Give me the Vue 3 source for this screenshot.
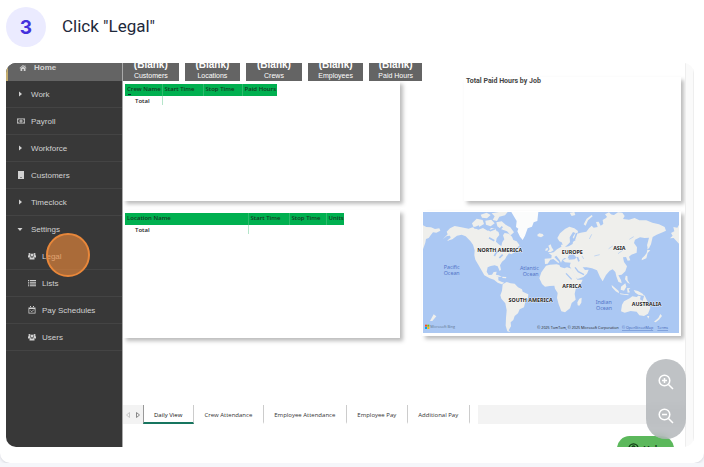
<script setup>
const menu = [
  { label: 'Home', icon: 'home', active: true },
  { label: 'Work', icon: 'right' },
  { label: 'Payroll', icon: 'money' },
  { label: 'Workforce', icon: 'right' },
  { label: 'Customers', icon: 'building' },
  { label: 'Timeclock', icon: 'right' },
  { label: 'Settings', icon: 'down', open: true },
  { label: 'Legal', icon: 'users', sub: true },
  { label: 'Lists', icon: 'list', sub: true },
  { label: 'Pay Schedules', icon: 'calendar', sub: true },
  { label: 'Users', icon: 'users', sub: true },
]
const kpis = ['Customers', 'Locations', 'Crews', 'Employees', 'Paid Hours']
const tabs = ['Daily View', 'Crew Attendance', 'Employee Attendance', 'Employee Pay', 'Additional Pay']
</script>

<template>
  <article class="step">
    <header class="step-head">
      <span class="step-number">3</span>
      <h1>Click "Legal"</h1>
    </header>

    <div class="frame">
      <nav class="sidebar">
        <a
          v-for="item in menu"
          :key="item.label"
          href="#"
          class="item"
          :class="{ active: item.active, sub: item.sub, open: item.open }"
        >
          <svg class="icon" viewBox="0 0 16 16" aria-hidden="true">
            <path v-if="item.icon === 'home'" d="M8 2 15 8l-1 1-6-5-6 5-1-1zM3 9l5-4 5 4v5H9.500V10h-3v4H3zM11 3h2v3l-2-2z" />
            <path v-else-if="item.icon === 'right'" d="M4 3l6 5-6 5z" />
            <path v-else-if="item.icon === 'down'" d="M1 6h10L6 12z" />
            <g v-else-if="item.icon === 'money'">
              <path fill-rule="evenodd" d="M0 3h16v10H0zM1.500 4.500v7h13v-7z" />
              <path fill-rule="evenodd" d="M8 5a3 3 0 0 1 0 6 3 3 0 0 1 0-6zM7.200 6.500v3h1.600v-3z" />
              <path d="M2 5h2L2 7zM14 5h-2l2 2zM2 11h2L2 9zM14 11h-2l2-2z" />
            </g>
            <path v-else-if="item.icon === 'building'" fill-rule="evenodd" d="M2 0h12v16H2zM7 12v2h2v-2z" />
            <g v-else-if="item.icon === 'users'">
              <circle cx="3" cy="4" r="2.200" /><circle cx="13" cy="4" r="2.200" /><circle cx="8" cy="6" r="3" />
              <path d="M0 11V8q0-2 2-2h2q0 3 2 4-3 0-3 1zM16 11V8q0-2-2-2h-2q0 3-2 4 3 0 3 1zM3 15v-2q0-3 2-3 3 2 6 0 2 0 2 3v2z" />
            </g>
            <path v-else-if="item.icon === 'list'" d="M0 2h2.500v2H0zM4 2h12v2H4zM0 5.500h2.500v2H0zM4 5.500h12v2H4zM0 9h2.500v2H0zM4 9h12v2H4zM0 12.500h2.500v2H0zM4 12.500h12v2H4z" />
            <g v-else>
              <path fill-rule="evenodd" d="M1 3h14v12H1zM2.500 6v7.500h11V6zM4 0h2v4H4zM10 0h2v4h-2z" />
              <path d="M5 9l2.500 2.500L12 7" fill="none" stroke="currentColor" stroke-width="1.500" />
            </g>
          </svg>
          <span>{{ item.label }}</span>
        </a>
      </nav>

      <main class="report">
        <div class="panels">
          <div class="left">
            <div class="kpis">
              <div v-for="k in kpis" :key="k" class="kpi">
                <strong>(Blank)</strong>
                <span>{{ k }}</span>
              </div>
            </div>
            <section class="card crew">
              <table>
                <thead>
                  <tr>
                    <th class="w37 sorted">Crew Name</th>
                    <th class="w41">Start Time</th>
                    <th class="w39">Stop Time</th>
                    <th class="w35">Paid Hours</th>
                  </tr>
                </thead>
                <tbody>
                  <tr><td>Total</td><td></td><td></td><td></td></tr>
                </tbody>
              </table>
            </section>
            <section class="card location">
              <table>
                <thead>
                  <tr>
                    <th class="w123">Location Name</th>
                    <th class="w41">Start Time</th>
                    <th class="w37">Stop Time</th>
                    <th class="w18">Units</th>
                  </tr>
                </thead>
                <tbody>
                  <tr><td>Total</td><td></td><td></td><td></td></tr>
                </tbody>
              </table>
            </section>
          </div>

          <div class="right">
            <section class="card job"><h2>Total Paid Hours by Job</h2></section>
            <section class="card map">
              <svg viewBox="24 22 768 363" role="img" aria-label="World map">
                <rect x="24" y="22" width="768" height="363" fill="#abc8f3" />
                <g fill="#efefec">
                  <path d="M24 62l10 5 14 1 12 5 13-2 3 7-12 6-10-1-7 9-6 8-8 3-2 11-7 20z" />
                  <path d="M84 103l14-14-3-8 10-10 14-7 20 4 22 4 12-4 17 7 14-5 14 8 12-7 10 10 10-1 3 11-8 10-2 10 8 8 8 5 3-12 6-8-4-12 5-7 13 2 9 9 4 10 10 4 9 12-8 8-12 6-8 2 14 4-11 7-7-3-7 9-5 9-9 7-6 11 3 13-4 4-6-14-9-3-12 2-9 4-3 13 6 10 10-1 5-8 9-1-3 12 8 3 0 11 9 4 9 3-8 5-12-5-11-9-13-4-16-9-9-16-10-17-8-14-3-13 1-15-5-17-8-11-14-14-12-5-14 3-14 11-17 5 12-10-2-6-9 1z" />
                  <path d="M171 56l14-14 18 4 4 12-15 9-17-1zM197 30l18-6 12 7-11 10-15-2zM230 26l22-4h26l-8 10-17 4-7 13-13-3 6-11zM211 48l18-3 10 11-12 9-14-5zM244 53l16-3 12 10 14 8 11 15-10 9-11-12-17-6-12-9zM226 70l14 1 7 12-12 3z" />
                  <path d="M234 209l17 3 10 5-12-1-14-4zM262 216l12 1-1 4-11-1zM303 132l13-4 8 10-12 3z" />
                  <path d="M263 239l12-7 12 4 12 1 10 11 12 6 2 7 17 8-1 11-8 11-4 17-13 6-5 12-10 8-4 12-8 7 1 12-7 12 5 5-9-2-5-17 1-23 2-23-4-21-12-14-3-10 5-14z" />
                  <path d="M367 90l6-4 10 2 3 5-8 5-10-3z" />
                  <path d="M400 123l7-4 3 9 6 9-10 6-8-1 6-8zM392 132l7-3-1 8-7 2z" />
                  <path d="M390 178l-1-16 20-1 1-9-9-6 15-3 10-9 13-8-1-6 6 0 2 8 15-3 12-7 1-12 8 2-9-10 8-13-7-3-10 16 1 15-9 9-9 7-7-16-7-3-6-10 8-14 15-13 13-7 15 5 11 8-2 8 10-3 17-3 8-10 8-8 6 6 12-2-5-15 8-1 6 12 8-5-2-12 10-6 9-11 15 2 12-8 13 1 7 10-5 9 18 2 17-5 14 7 21 0 18 7 20 5 17 8 4 11-10 5-18 7-12 7-5 22-7 13-5-10 6-23-13 1-14-2-15 7-3 10 9 13-1 16-16 6-7 6 4 11-8 1-5-11-9 1 3 14 9 13-5 15-11 10-10 2 8 14 2 10-10-5-6-16-3-13-8-8-9 4-11 13-10 19-8-13-9-20-15-6-16-3-12 0 7 8 11-1-5 12-11 10-17 6-7-6-10-20-7-13 3-10-17-1-7-7 16-5 20 2 6-4-9-10-14 2-5 12-9-3-6 5-4 9-4-8-10-13-6 4 15 16-3 2-15-12-9 2-8 12z" />
                  <path d="M393 183l12-3 20-1 8 2 3 6 12 4 8-3 14 4 8 16 9 17 16 0-7 15-14 14-3 14 3 17-12 10-5 16-15 12-11-3-8-21-5-19 2-15-8-13-2-9-14 1-14 2-9-8-8-17 6-18z" />
                  <path d="M493 282l7-3-1 15-6 9-5-1-1-9zM792 60l-5 9-12-2 3 13-10 5 5 8-8 8 11-1 16 17z" />
                  <path d="M621 300l6-10 17-9 8-6 13 2 5-4 7 2-2 9 8 5 5-18 7 14 6 12 5 13-7 17-12 7-14-2-8-11-18-2-18 5-11-4z" />
                  <path d="M590 241l8 7 13 11 1 7-10-6-11-12zM614 266l15 2 12 1-1 3-24-3zM618 246l13-10 3 10-7 12-10-3zM636 251l10-1-5 5 4 8-7 1zM656 256l13 3 14 8 5 7-18-4-9-6zM632 213l5 1 1 13 7 11-7-4-8-10zM681 161l8-8 6-8 2-10 9 2-8 8-4 16-14 6zM697 134l1-13 5 8zM736 328l5 6-9 11-10 8-5-2 13-11zM696 334h7l-3 8zM56 329l8 6-12 14-7 0zM107 38l-1 7z" />
                  <path d="M506 59l9-17 15-11 3 4-14 12-7 16zM464 24l14-2 3 9-11 3zM570 29l12-6 8 8-12 8z" />
                </g>
                <path d="M289 22h81l-3 27-11 4-5 13-13 5-8 22-7 13-8-10-8-16 3-8-7-5 2-18-9-15z" fill="#fbfcfc" />
                <g fill="none" stroke="#abc8f3" stroke-width="5">
                  <path d="M206 66l20 12 14-6M222 99l16 9M262 66l-13 14M192 64l-14 7M252 137l-9 8-5 9M263 150l-10 10M487 157l5 13M461 163l18-2M466 115l12-10 7-20" />
                  <path d="M480 188l10 13 17 9M453 206l17 18" stroke-width="4" />
                  <path d="M538 154l16-4M581 132l12-8M609 147l15-11M643 104l13-8M501 154l5 9M523 103l7-14" stroke-width="2" />
                </g>
                <g class="land">
                  <text x="254" y="141">NORTH AMERICA</text>
                  <text x="347" y="291">SOUTH AMERICA</text>
                  <text x="472" y="149">EUROPE</text>
                  <text x="613" y="135">ASIA</text>
                  <text x="471" y="249">AFRICA</text>
                  <text x="695" y="303">AUSTRALIA</text>
                </g>
                <g class="sea">
                  <text x="110" y="193">Pacific</text><text x="110" y="211">Ocean</text>
                  <text x="343" y="197">Atlantic</text><text x="347" y="215">Ocean</text>
                  <text x="566" y="299">Indian</text><text x="567" y="317">Ocean</text>
                </g>
                <rect x="30" y="360" width="6" height="6" fill="#f25022" /><rect x="37" y="360" width="6" height="6" fill="#7fba00" />
                <rect x="30" y="367" width="6" height="6" fill="#00a4ef" /><rect x="37" y="367" width="6" height="6" fill="#ffb900" />
                <text x="46" y="371" class="bing">Microsoft Bing</text>
                <text x="367" y="374" class="copy">© 2025 TomTom, © 2025 Microsoft Corporation</text>
                <text x="621" y="374" class="copy link">© OpenStreetMap</text>
                <text x="727" y="374" class="copy link">Terms</text>
              </svg>
            </section>
          </div>
        </div>

        <div class="tabs">
          <div class="arrows">
            <button type="button" class="dim" aria-label="Previous page">
              <svg viewBox="0 0 6 8"><path d="M4.500 1.500v5L1.500 4z" /></svg>
            </button>
            <button type="button" aria-label="Next page">
              <svg viewBox="0 0 6 8"><path d="M1.500 1.500v5L4.500 4z" /></svg>
            </button>
          </div>
          <button v-for="(t, i) in tabs" :key="t" type="button" class="tab" :class="{ current: i === 0 }">{{ t }}</button>
          <div class="rest"></div>
        </div>
      </main>

      <div class="scroll"></div>

      <button type="button" class="help">
        <svg viewBox="0 0 12 12" aria-hidden="true">
          <circle cx="6" cy="6" r="5" /><path d="M4.500 4.800q0-1.500 1.500-1.500t1.500 1.400Q7.500 5.500 6 6.300V7M6 8.200v1" />
        </svg>
        <span>Help</span>
      </button>
      <div class="zoom">
        <button type="button" aria-label="Zoom in">
          <svg viewBox="0 0 16 16"><circle cx="6.500" cy="6.500" r="5.300" /><path d="M10.500 10.500 15 15M6.500 4v5M4 6.500h5" /></svg>
        </button>
        <button type="button" aria-label="Zoom out">
          <svg viewBox="0 0 16 16"><circle cx="6.500" cy="6.500" r="5.300" /><path d="M10.500 10.500 15 15M4 6.500h5" /></svg>
        </button>
      </div>
      <span class="marker"></span>
    </div>
  </article>
</template>

<style>
body {
  margin: 0;
  background: #f5f6fa;
}
</style>

<style scoped>
* {
  box-sizing: border-box;
}
button {
  padding: 0;
  border: 0;
  background: none;
  font: inherit;
  color: inherit;
}
.step {
  padding: 7px 10px 16px 6px;
  background: #fff;
  border-radius: 0 0 10px 10px;
  box-shadow: 0 1px 3px #d4d5dc;
  font-family: "Liberation Sans", Arial, sans-serif;
}
.step-head {
  display: flex;
  align-items: center;
  gap: 16px;
  padding-bottom: 16px;
}
.step-number {
  display: grid;
  place-items: center;
  width: 40px;
  height: 40px;
  border-radius: 50%;
  background: #ebebff;
  color: #4330dc;
  font: 700 19px Inter, sans-serif;
}
h1 {
  margin: 0;
  padding-bottom: 3px;
  color: #1e293b;
  font: 400 17px Roboto, sans-serif;
}
.frame {
  position: relative;
  display: grid;
  grid-template-columns: 117px minmax(0, 1fr) 9px;
  overflow: hidden;
  border-radius: 10px;
  background: #fff;
}
.sidebar {
  margin-top: -9px;
  background: #383838;
  border-right: 1px solid #aaa;
}
.item {
  display: flex;
  align-items: center;
  gap: 9px;
  height: 27px;
  padding-left: 11px;
  border-bottom: 1px solid #444;
  color: #d2d2d2;
  font-size: 8px;
  text-decoration: none;
}
.item.active {
  gap: 7px;
  padding-left: 11px;
  border-left: 2px solid #c4ad6e;
  border-bottom: 0;
  background: #646464;
  font-weight: 700;
}
.item.open {
  border-bottom-color: transparent;
}
.item.sub {
  gap: 6px;
  padding-left: 22px;
}
.icon {
  width: 8px;
  height: 8px;
  flex: none;
  fill: currentColor;
}
.item:not(.active):not(.sub) .icon {
  margin-right: -3px;
}
.report {
  display: flex;
  flex-direction: column;
  padding-bottom: 23px;
  font-family: "Open Sans", sans-serif;
}
.panels {
  display: flex;
  padding-right: 4px;
}
.left {
  flex: 299 1 0;
  min-width: 0;
}
.right {
  flex: 259 1 0;
  min-width: 0;
  padding-top: 14px;
}
.kpis {
  display: grid;
  grid-template-columns: 56fr 56fr 56fr 56fr 53fr;
  gap: 6px;
  margin-top: -10px;
}
.kpi {
  display: flex;
  flex-direction: column;
  align-items: center;
  justify-content: flex-end;
  height: 28px;
  background: #646464;
  color: #fff;
  font: 7px/10px "Liberation Sans", sans-serif;
}
.kpi strong {
  font-size: 10px;
  line-height: 12px;
}
.card {
  background: #fff;
  box-shadow: 3px 3px 4px #bcbcbc;
}
.crew {
  height: 120px;
  margin: 0 22px 9px 0;
  padding: 3px 2px;
}
.location {
  height: 128px;
  margin-right: 22px;
  padding: 3px 2px;
}
.job {
  height: 124px;
  margin: 0 0 10px 42px;
  padding: 0 2px;
}
h2 {
  margin: 0;
  color: #444;
  font: 700 7px/8px Roboto, sans-serif;
}
.map {
  padding: 1px 2px 3px 1px;
}
.map svg {
  display: block;
  width: 100%;
}
table {
  border-collapse: collapse;
  table-layout: fixed;
  font-size: 6px;
  line-height: 8px;
}
th {
  height: 12px;
  padding: 1px 0 0 2px;
  background: #00b050;
  border-right: 1px solid #2fba6d;
  color: #153a22;
  font-weight: 600;
  text-align: left;
  vertical-align: top;
  white-space: nowrap;
}
th:last-child {
  border-right: 0;
}
.sorted {
  background: linear-gradient(#123, #123) 3px 10px / 3px 1px no-repeat #00b050;
}
td {
  height: 8px;
  padding: 1px 0 0 10px;
  color: #222;
  font-weight: 600;
}
td + td {
  padding: 0;
}
td:first-child {
  border-right: 1px solid #b5e5ca;
}
.w18 { min-width: 18px; width: 18px; }
.w35 { min-width: 35px; width: 35px; }
.w37 { min-width: 37px; width: 37px; }
.w39 { min-width: 39px; width: 39px; }
.w41 { min-width: 41px; width: 41px; }
.w123 { min-width: 123px; width: 123px; }
.land,
.sea {
  font-family: "Noto Sans", sans-serif;
  text-anchor: middle;
}
.land {
  fill: #222;
  font-size: 16px;
  font-weight: 700;
  stroke: #fff;
  stroke-width: 2px;
  paint-order: stroke;
}
.sea {
  fill: #5274c8;
  font-size: 16px;
}
.bing {
  fill: #60758f;
  font-size: 11px;
}
.copy {
  fill: #222;
  font-size: 11px;
}
.link {
  fill: #3b62b5;
  text-decoration: underline;
}
.tabs {
  display: flex;
  height: 19px;
  margin-top: auto;
  color: #333;
  font-size: 6px;
}
.arrows {
  display: flex;
  align-items: center;
  justify-content: space-around;
  width: 20px;
  background: #f3f3f3;
}
.arrows svg {
  display: block;
  width: 6px;
  height: 8px;
  fill: none;
  stroke: #888;
}
.arrows .dim {
  opacity: 0.4;
}
.tab {
  padding: 2px 11px 0 10px;
  border-right: 1px solid #ccc;
  border-bottom: 2px solid transparent;
  white-space: nowrap;
}
.tab.current {
  border-left: 1px solid #999;
  border-bottom-color: #17755f;
  color: #111;
}
.rest {
  flex: 1;
  margin-left: 8px;
  background: #f3f3f3;
}
.scroll {
  min-height: 384px;
  border-left: 1px solid #eee;
  border-right: 1px solid #eee;
  background: #fafafa;
}
.help {
  position: absolute;
  right: 20px;
  bottom: -14px;
  display: flex;
  align-items: center;
  justify-content: center;
  gap: 4px;
  width: 57px;
  height: 25px;
  border-radius: 13px;
  background: #5cb85c;
  color: #123d16;
  font-size: 9px;
  font-weight: 700;
}
.help svg {
  width: 11px;
  height: 11px;
  fill: none;
  stroke: currentColor;
  stroke-width: 1.500;
}
.zoom {
  position: absolute;
  right: 8px;
  bottom: 8px;
  display: flex;
  flex-direction: column;
  align-items: center;
  gap: 18px;
  width: 40px;
  padding: 15px 0;
  border-radius: 20px;
  background: rgba(169, 173, 178, 0.75);
  backdrop-filter: blur(3px);
}
.zoom svg {
  display: block;
  width: 16px;
  height: 16px;
  fill: none;
  stroke: #fff;
  stroke-width: 1.500;
}
.marker {
  position: absolute;
  left: 40px;
  top: 170px;
  width: 44px;
  height: 44px;
  border: 2px solid #e8873a;
  border-radius: 50%;
  background: rgba(232, 135, 58, 0.65);
}
</style>
